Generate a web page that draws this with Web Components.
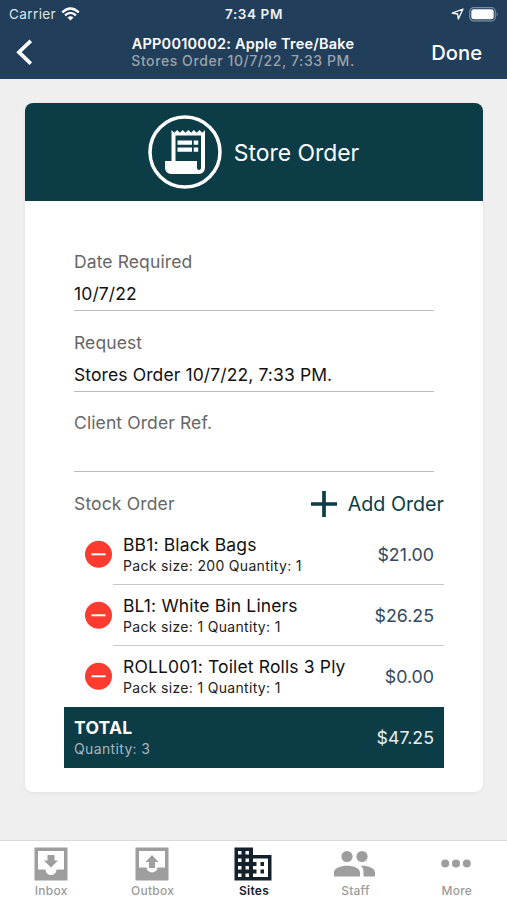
<!DOCTYPE html>
<html lang="en">
<head>
<meta charset="utf-8">
<title>Store Order</title>
<style>
html,body{margin:0;height:100%}
body{font-family:Inter,"Liberation Sans",sans-serif;background:#efefef;color:#111;overflow:hidden}
</style>
</head>
<body>
<order-app></order-app>
<script>
function define(name, html) {
  const t = document.createElement('template');
  t.innerHTML = html;
  customElements.define(name, class extends HTMLElement {
    constructor() {
      super();
      this.attachShadow({mode: 'open'}).appendChild(t.content.cloneNode(true));
    }
  });
}

define('status-bar', `
<style>
:host{display:grid;grid-template-columns:1fr auto 1fr;align-items:center;height:27px;padding:0 8px 0 9px;color:#fff;font-size:13.5px;line-height:27px;box-sizing:border-box}
.l,.r{display:flex;align-items:center}
.l{gap:5px;color:#dfe6ec;letter-spacing:.4px}
.r{justify-content:flex-end;gap:5px}
.t{font-weight:600;font-size:13.5px;letter-spacing:.6px;color:#f0f4f7;padding-top:1px}
svg{display:block}
</style>
<div class="l"><span>Carrier</span>
<svg width="19" height="14" viewBox="0 0 19 14" fill="none" stroke="#fff" stroke-width="2.3"><path d="M1.2 5.4Q9.5-2.4 17.8 5.4"/><path d="M4 8.4Q9.5 3.3 15 8.4"/><path d="M9.5 13.6L6.5 10.6Q9.5 8.1 12.5 10.6Z" fill="#fff" stroke="none"/></svg></div>
<span class="t">7:34 PM</span>
<div class="r">
<svg width="13" height="12" viewBox="0 0 13 12" fill="none" stroke="#fff" stroke-width="1.3" stroke-linejoin="round"><path d="M1.200 5.200L12 1L7.300 11L6.600 6Z"/></svg>
<svg width="30" height="15" viewBox="0 0 30 15"><rect x=".7" y=".7" width="25.6" height="13.2" rx="4" fill="none" stroke="#7890a4" stroke-width="1.2"/><rect x="2.3" y="2.3" width="22.4" height="10" rx="2.5" fill="#fff"/><path d="M27.6 5q2.2 2.3 0 4.6z" fill="#7890a4"/></svg>
</div>`);

define('nav-bar', `
<style>
:host{display:grid;grid-template-columns:1fr auto 1fr;height:52px;padding:0 25px 0 16px;box-sizing:border-box;color:#fff}
svg{display:block;margin-top:12px}
.c{text-align:center;padding-top:8px;margin:0 6px 0 -6px}
.a{font-size:14.5px;font-weight:600;line-height:17px;letter-spacing:.23px}
.b{font-size:14px;line-height:18px;color:#9ba3aa;font-weight:500;letter-spacing:.58px}
.d{justify-self:end;font-size:20.200px;font-weight:500;line-height:51px}
</style>
<svg width="18" height="27" viewBox="0 0 18 27" fill="none" stroke="#fff" stroke-width="3.7"><path d="M14.800 1.800L2.900 13.200L14.800 24.600"/></svg>
<div class="c"><div class="a"><slot name="title"></slot></div><div class="b"><slot name="subtitle"></slot></div></div>
<div class="d"><slot name="action"></slot></div>`);

define('card-header', `
<style>
:host{display:flex;align-items:center;justify-content:center;gap:12px;height:97.500px;background:#0c3d47;color:#fff;font-size:22.9px;box-sizing:border-box;padding-right:1px}
svg{display:block}
span{padding-top:1px}
</style>
<svg width="74" height="74" viewBox="0 0 74 74"><circle cx="37" cy="37" r="35" fill="none" stroke="#fff" stroke-width="3.5"/>
<path fill="#fff" fill-rule="evenodd" d="M23.500 15l2.800 2.800 2.800-2.800 2.800 2.800 2.800-2.800 2.800 2.800 2.800-2.800 2.800 2.800 2.800-2.800 2.800 2.800 2.800-2.800 2.800 2.800 2.700-2.800V53a6 6 0 0 1-6 6H23a6 6 0 0 1-6-6V46h6.500ZM27.500 20.500V46H49V53a2 2 0 0 0 4 0V20.500Z"/>
<path fill="#fff" d="M29.500 25.500h14.500v4.300H29.500zM45.700 25.500h4.500v4.300H45.700zM29.500 32.500h14.500v4.300H29.500zM45.700 32.500h4.500v4.300H45.700z"/></svg>
<span><slot></slot></span>`);

define('form-field', `
<style>
:host{display:block;height:80.600px;box-sizing:border-box}
.l{font-size:17.5px;line-height:24px;color:#666;letter-spacing:.11px;padding-top:1px}
.v{font-size:17.5px;line-height:24px;height:24px;margin-top:8.500px;padding-bottom:3.500px;border-bottom:1.500px solid #bdbdbd;color:#111;letter-spacing:.11px}
</style>
<div class="l"><slot name="label"></slot></div><div class="v"><slot></slot></div>`);

define('order-heading', `
<style>
:host{display:flex;align-items:center;justify-content:space-between;height:33px;padding:0 0 7px 10px;box-sizing:border-box}
.l{font-size:17.5px;color:#666;letter-spacing:.15px}
.r{display:flex;align-items:center;gap:11px;font-size:19.700px;color:#0c3d47}
svg{display:block}
</style>
<span class="l"><slot></slot></span>
<span class="r"><svg width="26" height="26" viewBox="0 0 26 26"><path d="M13 0V26M0 13H26" stroke="#0c3d47" stroke-width="3.700"/></svg><slot name="action"></slot></span>`);

define('order-item', `
<style>
:host{display:grid;grid-template-columns:49px 1fr;height:61px}
.i{display:flex;align-items:center;padding-left:21px}
.m{display:flex;align-items:center;justify-content:space-between;padding:0 10px;border-bottom:1px solid var(--rule,#c8c8c8)}
.n{font-size:17.5px;line-height:22px;color:#111;padding-top:1px;letter-spacing:.15px}
.s{font-size:14px;line-height:19px;color:#222;letter-spacing:.32px}
.p{font-size:17.800px;color:#34495f;padding-top:1px}
</style>
<div class="i"><svg width="28" height="28" viewBox="0 0 28 28"><circle cx="13.500" cy="14.300" r="13.500" fill="#ff3b30"/><path d="M6.500 14.300H20.500" stroke="#fff" stroke-width="2"/></svg></div>
<div class="m"><div><div class="n"><slot></slot></div><div class="s"><slot name="detail"></slot></div></div><span class="p"><slot name="price"></slot></span></div>`);

define('order-total', `
<style>
:host{display:flex;align-items:center;justify-content:space-between;height:61px;background:#0c3d47;padding:0 10px;box-sizing:border-box;color:#fff}
.n{font-size:17.5px;font-weight:700;line-height:22px;padding-top:1px;letter-spacing:.25px}
.s{font-size:14px;line-height:19px;color:#a7b7bf;letter-spacing:.35px}
.p{font-size:17.800px;color:#e8eff2}
</style>
<div><div class="n"><slot></slot></div><div class="s"><slot name="detail"></slot></div></div><span class="p"><slot name="price"></slot></span>`);

define('tab-item', `
<style>
:host{display:flex;flex-direction:column;align-items:center;flex:1;color:#9b9b9b;font-size:12px;font-weight:500;padding-top:3px;letter-spacing:.25px}
.i{height:39px;display:flex;align-items:center}
.t{line-height:16px;padding-left:1px}
</style>
<div class="i"><slot name="icon"></slot></div><div class="t"><slot></slot></div>`);

define('tab-bar', `
<style>
:host{display:flex;height:60px;background:#fff;border-top:1px solid #dadada;box-sizing:border-box}
svg{display:block}
tab-item.on{color:#14202c;font-weight:600}
.on svg{margin-right:1px}
</style>
<tab-item><svg slot="icon" width="34" height="34" viewBox="0 0 34 34" fill="#9e9e9e"><path fill-rule="evenodd" d="M.5.5H33.500V33.500H.5ZM4 4V22.500H11.500A5.500 5.500 0 0 0 22.500 22.500H30V4Z"/><path d="M13.500 8H20.500V13.500H24L17 20.500L10 13.500H13.500Z"/></svg>Inbox</tab-item>
<tab-item><svg slot="icon" width="34" height="34" viewBox="0 0 34 34" fill="#9e9e9e"><path fill-rule="evenodd" d="M.5.5H33.500V33.500H.5ZM4 4V20.500H11.500A5.500 5 0 0 0 22.500 20.500H30V4Z"/><path d="M14 21V15H10.500L17 8L23.500 15H20V21Z"/></svg>Outbox</tab-item>
<tab-item class="on"><svg slot="icon" width="38" height="34" viewBox="0 0 38 34" fill="#14202c"><path fill-rule="evenodd" d="M.5.500H19V8H37.500V33.500H.5ZM4 4V7.500H7.500V4ZM11.500 4V7.500H15V4ZM4 11.500V15H7.500V11.500ZM11.500 11.500V15H15V11.500ZM4 19V22.500H7.500V19ZM11.500 19V22.500H15V19ZM4 26.500V30H7.500V26.500ZM11.500 26.500V30H15V26.500ZM19 11.500V15H22.500V19H19V22.500H22.500V26.500H19V30H34V11.500Z"/><path d="M26.500 15H30V19H26.500ZM26.500 22.500H30V26.500H26.500Z"/></svg>Sites</tab-item>
<tab-item><svg slot="icon" width="41" height="34" viewBox="0 0 41 34" fill="#9e9e9e"><circle cx="13" cy="9.500" r="5.600"/><circle cx="28" cy="9.500" r="5.600"/><path d="M0 29.500V25.500C0 16.500 26 16.500 26 25.500V29.500ZM29.500 29.500H41V25.500C41 20.500 33 18.300 26.500 18.800C29.500 21 29.500 23.500 29.500 25.500Z"/></svg>Staff</tab-item>
<tab-item><svg slot="icon" width="30" height="34" viewBox="0 0 30 34" fill="#9e9e9e"><circle cx="4.200" cy="16.500" r="4"/><circle cx="15" cy="16.500" r="4"/><circle cx="25.800" cy="16.500" r="4"/></svg>More</tab-item>`);

define('order-app', `
<style>
:host{display:flex;flex-direction:column;height:900px}
.top{background:#213e5a}
main{flex:1;padding:24.400px 24px 0 25px}
.card{background:#fff;border-radius:8px;overflow:hidden;height:689px;box-shadow:0 1px 4px rgba(0,0,0,.05)}
.fields{padding:48.100px 49px 0}
.list{padding:0 39px}
order-item:last-of-type{--rule:transparent}
</style>
<div class="top"><status-bar></status-bar>
<nav-bar><span slot="title">APP0010002: Apple Tree/Bake</span><span slot="subtitle">Stores Order 10/7/22, 7:33 PM.</span><span slot="action">Done</span></nav-bar></div>
<main><div class="card">
<card-header>Store Order</card-header>
<div class="fields">
<form-field><span slot="label">Date Required</span>10/7/22</form-field>
<form-field><span slot="label">Request</span>Stores Order 10/7/22, 7:33 PM.</form-field>
<form-field><span slot="label">Client Order Ref.</span></form-field>
</div>
<div class="list">
<order-heading>Stock Order<span slot="action">Add Order</span></order-heading>
<order-item>BB1: Black Bags<span slot="detail">Pack size: 200 Quantity: 1</span><span slot="price">$21.00</span></order-item>
<order-item>BL1: White Bin Liners<span slot="detail">Pack size: 1 Quantity: 1</span><span slot="price">$26.25</span></order-item>
<order-item>ROLL001: Toilet Rolls 3 Ply<span slot="detail">Pack size: 1 Quantity: 1</span><span slot="price">$0.00</span></order-item>
<order-total>TOTAL<span slot="detail">Quantity: 3</span><span slot="price">$47.25</span></order-total>
</div>
</div></main>
<tab-bar></tab-bar>`);
</script>
</body>
</html>
